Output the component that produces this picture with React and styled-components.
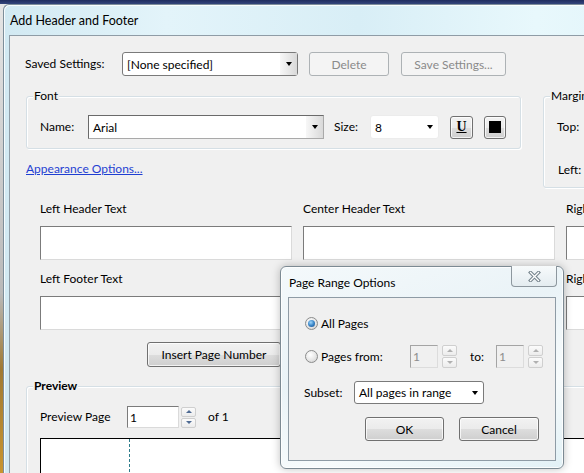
import React from 'react';
import styled, { createGlobalStyle, css } from 'styled-components';

const GlobalStyle = createGlobalStyle`
  html, body { margin: 0; padding: 0; }
  body {
    font-family: Lato, "Noto Sans", "Liberation Sans", sans-serif;
    font-size: 12px;
    color: #000;
    background: #c8c8c8;
  }
`;

const Desktop = styled.div`
  position: relative;
  width: 584px;
  height: 473px;
  overflow: hidden;
  box-sizing: border-box;
  padding: 4px 0 0 3px;
  background:
    linear-gradient(#1f2c5e 0, #33457c 4px, transparent 4px),
    linear-gradient(to bottom, #e6e6e6 0%, #b9b9b9 62%, #a07a34 78%, #c99530 100%);
`;

const Window = styled.div`
  width: 740px;
  height: 560px;
  box-sizing: border-box;
  border: 1px solid #7d8e9a;
  border-right: none;
  border-bottom: none;
  border-radius: 6px 0 0 0;
  padding-left: 5px;
  background: linear-gradient(to right, #d2e9f2 0%, #e3f4fa 22%, #d8eef6 48%, #e8f8fc 72%, #dcf1f8 100%);
  box-shadow: inset 1px 1px 0 rgba(255, 255, 255, 0.8);
`;

const TitleBar = styled.div`
  height: 30px;
  display: flex;
  align-items: center;
  padding-left: 1px;
  font-size: 12.5px;
`;

const Client = styled.div`
  height: 520px;
  box-sizing: border-box;
  border-top: 1px solid #8f9ca6;
  border-left: 1px solid #8f9ca6;
  background: #f0f0f0;
  padding-top: 16px;
`;

const Row = styled.div`
  display: flex;
  align-items: center;
  height: ${p => p.$h || 24}px;
  margin-top: ${p => p.$mt || 0}px;
  margin-left: ${p => p.$ml || 0}px;
`;

const Label = styled.span`
  display: block;
  flex-shrink: 0;
  width: ${p => (p.$w ? `${p.$w}px` : 'auto')};
  margin-left: ${p => p.$ml || 0}px;
  margin-top: ${p => p.$mt || 0}px;
  line-height: 16px;
  white-space: nowrap;
`;

const Button = styled.button`
  box-sizing: border-box;
  flex-shrink: 0;
  width: ${p => p.$w}px;
  height: ${p => p.$h || 24}px;
  margin-left: ${p => p.$ml || 0}px;
  padding: 0;
  font: inherit;
  color: #000;
  border: 1px solid #707070;
  border-radius: 3px;
  background: linear-gradient(#f2f2f2 0%, #ebebeb 50%, #dddddd 51%, #cfcfcf 100%);
  box-shadow: inset 0 0 0 1px rgba(255, 255, 255, 0.75);
  display: flex;
  align-items: center;
  justify-content: center;
  ${p => p.disabled && css`
    color: #8a8a8a;
    border-color: #adb2b5;
    background: #f4f4f4;
    box-shadow: none;
  `}
`;

const Underline = styled.span`
  font-family: "Liberation Serif", serif;
  font-weight: bold;
  font-size: 14px;
  text-decoration: underline;
  text-underline-offset: 1px;
`;

const Swatch = styled.span`
  width: 12px;
  height: 12px;
  background: #000;
`;

const Combo = styled.div`
  box-sizing: border-box;
  flex-shrink: 0;
  display: flex;
  align-items: stretch;
  width: ${p => p.$w}px;
  height: ${p => p.$h || 24}px;
  margin-left: ${p => p.$ml || 0}px;
  background: #fff;
  border: 1px solid;
  border-color: ${p => p.$plain ? '#ececec' : p.$sunken ? '#6a6a6a #a9a9a9 #a9a9a9 #6a6a6a' : '#7a7a7a'};
  border-radius: ${p => (p.$sunken ? 0 : 3)}px;
`;

const ComboText = styled.span`
  flex: 1;
  display: flex;
  align-items: center;
  padding-left: 4px;
`;

const ComboArrow = styled.span`
  width: 17px;
  display: flex;
  align-items: center;
  justify-content: center;
  background: ${p => (p.$shaded ? 'linear-gradient(to right, #f7f7f7, #d9d9d9)' : 'transparent')};
  &::after {
    content: '';
    border-left: 3.5px solid transparent;
    border-right: 3.5px solid transparent;
    border-top: 4px solid #000;
  }
`;

const GroupsRow = styled.div`
  display: flex;
  margin: 20px 0 0 16px;
`;

const Column = styled.div`
  width: ${p => p.$w}px;
  flex-shrink: 0;
`;

const Group = styled.div`
  position: relative;
  box-sizing: border-box;
  flex-shrink: 0;
  width: ${p => p.$w}px;
  height: ${p => p.$h}px;
  margin-left: ${p => p.$ml || 0}px;
  margin-top: ${p => p.$mt || 0}px;
  border: 1px solid #d5dfe5;
  border-radius: 3px;
  box-shadow: inset 1px 1px 0 #fff, 1px 1px 0 #fff;
  padding: ${p => p.$pad};
`;

const Legend = styled.span`
  position: absolute;
  top: -9px;
  left: 6px;
  padding: 0 1px;
  line-height: 16px;
  background: #f0f0f0;
  font-weight: ${p => (p.$bold ? 'bold' : 'normal')};
`;

const Link = styled.a`
  display: inline-block;
  margin-top: 12px;
  line-height: 16px;
  color: #1f3fd2;
  text-decoration: underline;
`;

const TextGrid = styled.div`
  display: grid;
  grid-template-columns: 252px 252px 252px;
  column-gap: 11px;
  margin: 13px 0 0 30px;
`;

const Field = styled.div`
  display: flex;
  flex-direction: column;
  margin-top: ${p => p.$mt || 0}px;
`;

const TextBox = styled.div`
  box-sizing: border-box;
  height: ${p => p.$h || 34}px;
  width: ${p => (p.$w ? `${p.$w}px` : '100%')};
  margin-top: ${p => p.$mt || 0}px;
  flex-shrink: 0;
  border: 1px solid;
  border-color: #7b7b7b #dadada #dadada #7b7b7b;
  background: ${p => (p.$disabled ? '#f0f0f0' : '#fff')};
  color: ${p => (p.$disabled ? '#8d8d8d' : '#000')};
  display: flex;
  align-items: center;
  padding-left: 2px;
  ${p => p.$disabled && css`border-color: #a4a4a4 #dcdcdc #dcdcdc #a4a4a4;`}
`;

const Spin = styled.div`
  display: flex;
  flex-direction: column;
  gap: 1px;
  width: 15px;
  margin-left: ${p => p.$ml || 2}px;
  flex-shrink: 0;
`;

const SpinButton = styled.span`
  box-sizing: border-box;
  height: ${p => p.$h}px;
  border: 1px solid #cfcfcf;
  border-radius: 2px;
  background: linear-gradient(#fbfbfb, #ececec);
  display: flex;
  align-items: center;
  justify-content: center;
  &::after {
    content: '';
    border-left: 3px solid transparent;
    border-right: 3px solid transparent;
    ${p => (p.$down
      ? css`border-top: 3px solid ${p.$off ? '#b0b0b0' : '#4f6b93'};`
      : css`border-bottom: 3px solid ${p.$off ? '#b0b0b0' : '#4f6b93'};`)}
  }
`;

const Spinner = ({ h = 11, off }) => (
  <Spin $ml={off ? 4 : 2}>
    <SpinButton $h={h} $off={off} />
    <SpinButton $h={h} $off={off} $down />
  </Spin>
);

const PreviewBox = styled.div`
  box-sizing: border-box;
  margin-top: 10px;
  width: 640px;
  height: 120px;
  border: 1px solid #000;
  background: #fff;
  padding-left: 88px;
`;

const Guide = styled.div`
  width: 0;
  height: 100%;
  border-left: 1px dashed #2e7d8c;
`;

/* dialog lying over the main window */
const Dialog = styled.div`
  position: absolute;
  left: 280px;
  top: 266px;
  width: 284px;
  height: 203px;
  box-sizing: border-box;
  display: flex;
  flex-direction: column;
  padding: 0 7px 7px 7px;
  border: 1px solid #7c8a93;
  border-radius: 6px;
  background: linear-gradient(160deg, #f4f9fb 0%, #eaf3f7 40%, #f7fbfc 70%, #e2f1f6 100%);
  box-shadow: 0 0 8px rgba(0, 0, 0, 0.25), inset 0 0 0 1px rgba(255, 255, 255, 0.8);
`;

const DialogTitle = styled.div`
  height: 30px;
  display: flex;
  align-items: center;
  padding-left: 1px;
`;

const CloseButton = styled.div`
  position: absolute;
  top: -1px;
  right: 6px;
  width: 46px;
  height: 21px;
  box-sizing: border-box;
  border: 1px solid #8d979e;
  border-top: none;
  border-radius: 0 0 4px 4px;
  background: linear-gradient(#f7fafb, #e4ecf0);
  display: flex;
  align-items: center;
  justify-content: center;
`;

const DialogBody = styled.div`
  flex: 1;
  border: 1px solid #8e9ba5;
  background: #f0f0f0;
  padding: 17px 16px 0 16px;
`;

const RadioWrap = styled.label`
  display: flex;
  align-items: center;
  width: ${p => (p.$w ? `${p.$w}px` : 'auto')};
  flex-shrink: 0;
`;

const RadioDot = styled.span`
  box-sizing: border-box;
  width: 13px;
  height: 13px;
  border-radius: 50%;
  border: 1px solid #8b8c8c;
  background: radial-gradient(circle at 40% 35%, #ffffff 0%, #e6e6e6 55%, #c9c9c9 100%);
  display: flex;
  align-items: center;
  justify-content: center;
  margin-right: 3px;
  ${p => p.$on && css`
    &::after {
      content: '';
      width: 7px;
      height: 7px;
      border-radius: 50%;
      background: radial-gradient(circle at 40% 35%, #9fd6fb 0%, #3a86c8 50%, #1a4a86 100%);
    }
  `}
`;

const ButtonRow = styled.div`
  display: flex;
  justify-content: flex-end;
  gap: 15px;
  margin-top: 13px;
`;

export default function App() {
  return (
    <>
      <GlobalStyle />
      <Desktop>
        <Window>
          <TitleBar>Add Header and Footer</TitleBar>
          <Client>
            <Row $ml={15}>
              <Label $w={97}>Saved Settings:</Label>
              <Combo $w={176}>
                <ComboText>[None specified]</ComboText>
                <ComboArrow $shaded />
              </Combo>
              <Button $w={80} $ml={11} disabled>Delete</Button>
              <Button $w={105} $ml={12} disabled>Save Settings...</Button>
            </Row>

            <GroupsRow>
              <Column $w={495}>
                <Group $w={495} $h={53} $pad="18px 0 0 13px">
                  <Legend>Font</Legend>
                  <Row>
                    <Label $w={48}>Name:</Label>
                    <Combo $w={236} $sunken>
                      <ComboText>Arial</ComboText>
                      <ComboArrow $shaded />
                    </Combo>
                    <Label $w={36} $ml={10}>Size:</Label>
                    <Combo $w={69} $plain>
                      <ComboText>8</ComboText>
                      <ComboArrow />
                    </Combo>
                    <Button $w={23} $h={23} $ml={11}><Underline>U</Underline></Button>
                    <Button $w={22} $h={23} $ml={11}><Swatch /></Button>
                  </Row>
                </Group>
                <Link>Appearance Options...</Link>
              </Column>
              <Group $w={120} $h={92} $ml={22} $pad="22px 0 0 13px">
                <Legend>Margins</Legend>
                <Label>Top:</Label>
                <Label $mt={27} $ml={1}>Left:</Label>
              </Group>
            </GroupsRow>

            <TextGrid>
              {['Left', 'Center', 'Right'].map(side => (
                <div key={side}>
                  <Field>
                    <Label>{side} Header Text</Label>
                    <TextBox $mt={9} />
                  </Field>
                  <Field $mt={11}>
                    <Label>{side} Footer Text</Label>
                    <TextBox $mt={9} />
                  </Field>
                </div>
              ))}
            </TextGrid>

            <Row $h={25} $mt={12} $ml={137}>
              <Button $w={134} $h={25}>Insert Page Number</Button>
            </Row>

            <Group $w={700} $h={200} $ml={16} $mt={19} $pad="19px 0 0 13px">
              <Legend $bold>Preview</Legend>
              <Row $h={22}>
                <Label $w={87}>Preview Page</Label>
                <TextBox $w={52} $h={22}>1</TextBox>
                <Spinner h={10} />
                <Label $ml={12}>of 1</Label>
              </Row>
              <PreviewBox>
                <Guide />
              </PreviewBox>
            </Group>
          </Client>
        </Window>

        <Dialog>
          <DialogTitle>Page Range Options</DialogTitle>
          <CloseButton>
            <svg width="13" height="11" viewBox="0 0 13 11">
              <path d="M2.5 1.5 L10.5 9.5 M10.5 1.5 L2.5 9.5" stroke="#75838c" strokeWidth="3.4" strokeLinecap="square" />
              <path d="M2.5 1.5 L10.5 9.5 M10.5 1.5 L2.5 9.5" stroke="#ffffff" strokeWidth="1.3" strokeLinecap="square" />
            </svg>
          </CloseButton>
          <DialogBody>
            <Row $h={16}>
              <RadioWrap>
                <RadioDot $on />
                All Pages
              </RadioWrap>
            </Row>
            <Row $h={23} $mt={14}>
              <RadioWrap $w={105}>
                <RadioDot />
                Pages from:
              </RadioWrap>
              <TextBox $w={28} $h={23} $disabled>1</TextBox>
              <Spinner off />
              <Label $w={26} $ml={13}>to:</Label>
              <TextBox $w={28} $h={23} $disabled>1</TextBox>
              <Spinner off />
            </Row>
            <Row $h={23} $mt={13} $ml={-1}>
              <Label $w={50}>Subset:</Label>
              <Combo $w={130} $h={23}>
                <ComboText>All pages in range</ComboText>
                <ComboArrow />
              </Combo>
            </Row>
            <ButtonRow>
              <Button $w={79} $h={24}>OK</Button>
              <Button $w={80} $h={24}>Cancel</Button>
            </ButtonRow>
          </DialogBody>
        </Dialog>
      </Desktop>
    </>
  );
}
